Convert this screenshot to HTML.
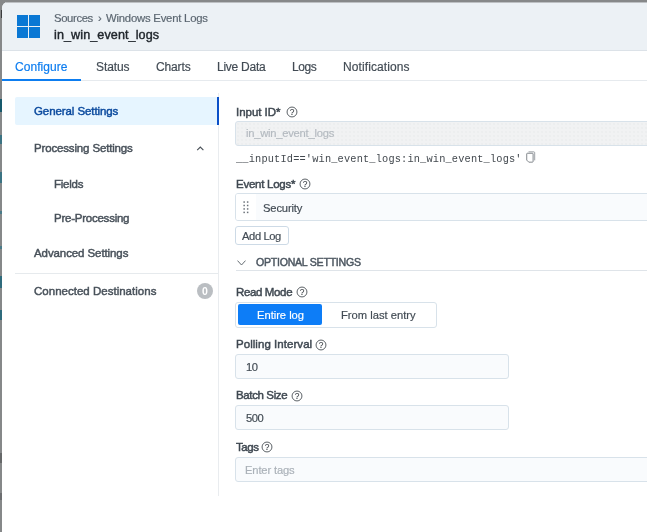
<!DOCTYPE html>
<html>
<head>
<meta charset="utf-8">
<title>in_win_event_logs</title>
<style>
*{box-sizing:border-box;margin:0;padding:0}
html,body{width:647px;height:532px;overflow:hidden}
body{background:#868889;font-family:'Liberation Sans','DejaVu Sans',sans-serif;position:relative;color:#3d4750}
.abs{position:absolute}
svg{will-change:transform}
#modal{position:absolute;left:2px;top:2px;width:700px;height:600px;background:linear-gradient(to bottom,#ecf1f5 48px,#fff 48px);border-radius:6px 0 0 0;overflow:hidden}
.t{position:absolute;white-space:pre;line-height:1;will-change:transform}
</style>
</head>
<body>
<div class="abs" style="left:1px;top:10px;width:1px;height:8px;background:#3a3c3e"></div>
<div class="abs" style="left:0;top:99px;width:2px;height:13px;background:#17596c"></div>
<div class="abs" style="left:0;top:135px;width:2px;height:9px;background:#3b7383"></div>
<div class="abs" style="left:0;top:172px;width:2px;height:11px;background:#3b7383"></div>
<div class="abs" style="left:0;top:211px;width:2px;height:3px;background:#4a7b89"></div>
<div class="abs" style="left:0;top:246px;width:2px;height:3px;background:#4a7b89"></div>
<div class="abs" style="left:0;top:276px;width:2px;height:12px;background:#2f6b7c"></div>
<div class="abs" style="left:0;top:310px;width:2px;height:10px;background:#2f6b7c"></div>
<div class="abs" style="left:0;top:453px;width:2px;height:10px;background:#666869"></div>
<div class="abs" style="left:0;top:493px;width:2px;height:7px;background:#6c6e70"></div>
<div class="abs" style="left:6px;top:2px;width:700px;height:1px;background:#bdc0c3;z-index:3"></div>
<div id="modal">
 <div class="abs" style="left:0px;top:0px;width:700px;height:48px;background:#ecf1f5;"></div>
 <div class="abs" style="left:0px;top:48px;width:700px;height:1px;background:#dce2e8;"></div>
 <svg class="abs" style="left:15px;top:13px" width="23" height="23" viewBox="0 0 23 23"><g fill="#0a78d4"><rect x="0" y="0" width="11" height="11"/><rect x="12" y="0" width="11" height="11"/><rect x="0" y="12" width="11" height="11"/><rect x="12" y="12" width="11" height="11"/></g></svg>
 <div class="abs" style="left:0px;top:78px;width:700px;height:1px;background:#e6eaee;"></div>
 <div class="abs" style="left:0px;top:76.5px;width:78.5px;height:2px;background:#0d7df0;"></div>

 <div class="abs" style="left:13px;top:95px;width:203px;height:28px;background:#e6f5ff;border-radius:2px 0 0 2px;"></div>
 <div class="abs" style="left:216px;top:91px;width:1px;height:403px;background:#e9ecef;"></div>
 <div class="abs" style="left:215px;top:95px;width:2px;height:28px;background:#0b50c8;"></div>
 <svg class="abs" style="left:194.2px;top:143px" width="9" height="7" viewBox="0 0 9 7"><path d="M1.2 5.2 L4.3 2.1 L7.4 5.2" fill="none" stroke="#4a5158" stroke-width="1.15"/></svg>
 <div class="abs" style="left:13px;top:271px;width:203px;height:1px;background:#e6eaed;"></div>
 <div class="abs" style="left:194.5px;top:281px;width:16px;height:16px;background:#babec2;border-radius:8px;"></div>
 <div class="t" id="badge" style="left:199.6px;top:284px;font-size:10.5px;font-weight:bold;color:#fff">0</div>

 <div class="abs" style="left:233px;top:119px;width:501px;height:25px;border:1px solid #d8e2ea;border-radius:3px;background:#f9fbfd;background-color:#f1f2f3;background-image:radial-gradient(circle,#e6e8ea 0.55px,transparent 0.8px);background-size:4px 4px;"></div>
 <svg class="abs" style="left:283.5px;top:103.7px" width="12" height="12" viewBox="0 0 12 12"><circle cx="6" cy="6" r="4.95" fill="none" stroke="#4a5056" stroke-width="0.9"/><text x="6" y="8.95" font-size="8.4" text-anchor="middle" fill="#383e44" stroke="#383e44" stroke-width="0.1" font-family="'Liberation Sans','DejaVu Sans',sans-serif">?</text></svg>
 <svg class="abs" style="left:523.8px;top:149.4px" width="9.5" height="12.2" viewBox="0 0 10 13"><path d="M2.6 0.9 H8.3 Q9.2 0.9 9.2 1.8 V10" fill="none" stroke="#8a9096" stroke-width="0.9"/><path d="M1.4 2.4 H6.8 Q7.5 2.4 7.5 3.1 V11.2 Q7.5 11.9 6.8 11.9 H2.9 L0.7 9.7 V3.1 Q0.7 2.4 1.4 2.4 Z" fill="#fff" stroke="#6c7278" stroke-width="0.9"/></svg>

 <svg class="abs" style="left:296.7px;top:175.5px" width="12" height="12" viewBox="0 0 12 12"><circle cx="6" cy="6" r="4.95" fill="none" stroke="#4a5056" stroke-width="0.9"/><text x="6" y="8.95" font-size="8.4" text-anchor="middle" fill="#383e44" stroke="#383e44" stroke-width="0.1" font-family="'Liberation Sans','DejaVu Sans',sans-serif">?</text></svg>
 <div class="abs" style="left:233px;top:191px;width:501px;height:28px;border:1px solid #d8e2ea;border-radius:3px;background:#f9fbfd;"></div>
 <div class="abs" style="left:234px;top:192px;width:19.5px;height:26px;background:#fff;border-radius:2px 0 0 2px;"></div>
 <svg class="abs" style="left:241.1px;top:199px" width="6" height="13" viewBox="0 0 6 13"><g fill="#6c737a"><rect x="0.4" y="0.30" width="1.5" height="1.5"/><rect x="3.9" y="0.30" width="1.5" height="1.5"/><rect x="0.4" y="3.75" width="1.5" height="1.5"/><rect x="3.9" y="3.75" width="1.5" height="1.5"/><rect x="0.4" y="7.20" width="1.5" height="1.5"/><rect x="3.9" y="7.20" width="1.5" height="1.5"/><rect x="0.4" y="10.65" width="1.5" height="1.5"/><rect x="3.9" y="10.65" width="1.5" height="1.5"/></g></svg>
 <div class="abs" style="left:233px;top:224px;width:54px;height:19px;border:1px solid #cddae6;border-radius:3px;background:#fff;"></div>

 <svg class="abs" style="left:234.5px;top:257.5px" width="9" height="6" viewBox="0 0 9 6"><path d="M0.5 0.6 L4.5 5 L8.5 0.6" fill="none" stroke="#555c63" stroke-width="0.9"/></svg>
 <div class="abs" style="left:234px;top:267.5px;width:500px;height:1px;background:#dfe4e9;"></div>

 <svg class="abs" style="left:293.7px;top:284.1px" width="12" height="12" viewBox="0 0 12 12"><circle cx="6" cy="6" r="4.95" fill="none" stroke="#4a5056" stroke-width="0.9"/><text x="6" y="8.95" font-size="8.4" text-anchor="middle" fill="#383e44" stroke="#383e44" stroke-width="0.1" font-family="'Liberation Sans','DejaVu Sans',sans-serif">?</text></svg>
 <div class="abs" style="left:233px;top:300px;width:202px;height:26px;border:1px solid #d8e2ea;border-radius:3px;background:#f9fbfd;background:#fff;"></div>
 <div class="abs" style="left:236px;top:302px;width:84px;height:21px;background:#0d7df7;border-radius:2px;"></div>

 <svg class="abs" style="left:312.6px;top:336.5px" width="12" height="12" viewBox="0 0 12 12"><circle cx="6" cy="6" r="4.95" fill="none" stroke="#4a5056" stroke-width="0.9"/><text x="6" y="8.95" font-size="8.4" text-anchor="middle" fill="#383e44" stroke="#383e44" stroke-width="0.1" font-family="'Liberation Sans','DejaVu Sans',sans-serif">?</text></svg>
 <div class="abs" style="left:233px;top:352px;width:274px;height:25px;border:1px solid #d8e2ea;border-radius:3px;background:#f9fbfd;"></div>
 <svg class="abs" style="left:288.6px;top:388.0px" width="12" height="12" viewBox="0 0 12 12"><circle cx="6" cy="6" r="4.95" fill="none" stroke="#4a5056" stroke-width="0.9"/><text x="6" y="8.95" font-size="8.4" text-anchor="middle" fill="#383e44" stroke="#383e44" stroke-width="0.1" font-family="'Liberation Sans','DejaVu Sans',sans-serif">?</text></svg>
 <div class="abs" style="left:233px;top:403px;width:274px;height:25px;border:1px solid #d8e2ea;border-radius:3px;background:#f9fbfd;"></div>
 <svg class="abs" style="left:259.4px;top:439.0px" width="12" height="12" viewBox="0 0 12 12"><circle cx="6" cy="6" r="4.95" fill="none" stroke="#4a5056" stroke-width="0.9"/><text x="6" y="8.95" font-size="8.4" text-anchor="middle" fill="#383e44" stroke="#383e44" stroke-width="0.1" font-family="'Liberation Sans','DejaVu Sans',sans-serif">?</text></svg>
 <div class="abs" style="left:233px;top:455px;width:501px;height:25px;border:1px solid #d8e2ea;border-radius:3px;background:#f9fbfd;"></div>

 <div class="t" id="crumb" style="left:51.90px;top:10.68px;font-size:11.3px;font-weight:normal;color:#5b6670;letter-spacing:-0.365px;-webkit-text-stroke:0.18px #5b6670">Sources</div>
 <div class="t" id="crumbsep" style="left:95.60px;top:10.68px;font-size:11.3px;font-weight:normal;color:#5b6670;letter-spacing:-0.266px;-webkit-text-stroke:0.18px #5b6670">›</div>
 <div class="t" id="crumb2" style="left:103.60px;top:10.68px;font-size:11.3px;font-weight:normal;color:#5b6670;letter-spacing:-0.206px;-webkit-text-stroke:0.18px #5b6670">Windows Event Logs</div>
 <div class="t" id="title" style="left:51.90px;top:26.58px;font-size:12.6px;font-weight:normal;color:#20262c;letter-spacing:0.087px;-webkit-text-stroke:0.4px #20262c">in_win_event_logs</div>
 <div class="t" id="tab1" style="left:12.80px;top:59.09px;font-size:12px;font-weight:normal;color:#0d7df0;letter-spacing:0.052px;-webkit-text-stroke:0.18px #0d7df0">Configure</div>
 <div class="t" id="tab2" style="left:94.10px;top:59.09px;font-size:12px;font-weight:normal;color:#424b54;letter-spacing:-0.105px;-webkit-text-stroke:0.18px #424b54">Status</div>
 <div class="t" id="tab3" style="left:153.70px;top:59.09px;font-size:12px;font-weight:normal;color:#424b54;letter-spacing:-0.141px;-webkit-text-stroke:0.18px #424b54">Charts</div>
 <div class="t" id="tab4" style="left:214.80px;top:59.09px;font-size:12px;font-weight:normal;color:#424b54;letter-spacing:-0.245px;-webkit-text-stroke:0.18px #424b54">Live Data</div>
 <div class="t" id="tab5" style="left:289.90px;top:59.09px;font-size:12px;font-weight:normal;color:#424b54;letter-spacing:-0.458px;-webkit-text-stroke:0.18px #424b54">Logs</div>
 <div class="t" id="tab6" style="left:340.90px;top:59.09px;font-size:12px;font-weight:normal;color:#424b54;letter-spacing:0.094px;-webkit-text-stroke:0.18px #424b54">Notifications</div>
 <div class="t" id="n1" style="left:32.10px;top:103.52px;font-size:11.5px;font-weight:normal;color:#0b4a9e;letter-spacing:-0.086px;-webkit-text-stroke:0.46px #0b4a9e">General Settings</div>
 <div class="t" id="n2" style="left:32.10px;top:140.52px;font-size:11.5px;font-weight:normal;color:#48515a;letter-spacing:-0.155px;-webkit-text-stroke:0.46px #48515a">Processing Settings</div>
 <div class="t" id="n3" style="left:52.10px;top:176.52px;font-size:11.5px;font-weight:normal;color:#48515a;letter-spacing:-0.248px;-webkit-text-stroke:0.46px #48515a">Fields</div>
 <div class="t" id="n4" style="left:52.10px;top:210.52px;font-size:11.5px;font-weight:normal;color:#48515a;letter-spacing:-0.238px;-webkit-text-stroke:0.46px #48515a">Pre-Processing</div>
 <div class="t" id="n5" style="left:32.10px;top:245.52px;font-size:11.5px;font-weight:normal;color:#48515a;letter-spacing:-0.094px;-webkit-text-stroke:0.46px #48515a">Advanced Settings</div>
 <div class="t" id="n6" style="left:32.10px;top:283.52px;font-size:11.5px;font-weight:normal;color:#48515a;letter-spacing:0.013px;-webkit-text-stroke:0.46px #48515a">Connected Destinations</div>
 <div class="t" id="l1" style="left:233.80px;top:104.52px;font-size:11.5px;font-weight:normal;color:#3f4851;letter-spacing:-0.028px;-webkit-text-stroke:0.46px #3f4851">Input ID*</div>
 <div class="t" id="v1" style="left:244.00px;top:125.77px;font-size:11.2px;font-weight:normal;color:#b4bac0;letter-spacing:-0.239px;-webkit-text-stroke:0.18px #b4bac0">in_win_event_logs</div>
 <div class="t" id="mono" style="left:234.00px;top:151.53px;font-size:10.3px;font-weight:normal;color:#43494f;letter-spacing:0.170px;font-family:'Liberation Mono','DejaVu Sans Mono',monospace">__inputId=='win_event_logs:in_win_event_logs'</div>
 <div class="t" id="l2" style="left:233.80px;top:176.52px;font-size:11.5px;font-weight:normal;color:#3f4851;letter-spacing:-0.256px;-webkit-text-stroke:0.46px #3f4851">Event Logs*</div>
 <div class="t" id="v2" style="left:260.80px;top:200.77px;font-size:11.2px;font-weight:normal;color:#424b54;letter-spacing:-0.153px;-webkit-text-stroke:0.18px #424b54">Security</div>
 <div class="t" id="addlog" style="left:240.10px;top:228.77px;font-size:11.2px;font-weight:normal;color:#424b54;letter-spacing:-0.398px;-webkit-text-stroke:0.18px #424b54">Add Log</div>
 <div class="t" id="opt" style="left:254.40px;top:255.28px;font-size:10.6px;font-weight:normal;color:#4d5761;letter-spacing:-0.258px;-webkit-text-stroke:0.46px #4d5761">OPTIONAL SETTINGS</div>
 <div class="t" id="l3" style="left:233.80px;top:284.52px;font-size:11.5px;font-weight:normal;color:#3f4851;letter-spacing:-0.363px;-webkit-text-stroke:0.46px #3f4851">Read Mode</div>
 <div class="t" id="b1" style="left:255.00px;top:307.77px;font-size:11.2px;font-weight:normal;color:#ffffff;letter-spacing:-0.027px;-webkit-text-stroke:0.18px #ffffff">Entire log</div>
 <div class="t" id="b2" style="left:338.60px;top:307.77px;font-size:11.2px;font-weight:normal;color:#424b54;letter-spacing:-0.001px;-webkit-text-stroke:0.18px #424b54">From last entry</div>
 <div class="t" id="l4" style="left:233.80px;top:336.52px;font-size:11.5px;font-weight:normal;color:#3f4851;letter-spacing:0.048px;-webkit-text-stroke:0.46px #3f4851">Polling Interval</div>
 <div class="t" id="v3" style="left:244.00px;top:359.77px;font-size:11.2px;font-weight:normal;color:#424b54;letter-spacing:-0.477px;-webkit-text-stroke:0.18px #424b54">10</div>
 <div class="t" id="l5" style="left:233.80px;top:387.52px;font-size:11.5px;font-weight:normal;color:#3f4851;letter-spacing:-0.378px;-webkit-text-stroke:0.46px #3f4851">Batch Size</div>
 <div class="t" id="v4" style="left:244.00px;top:410.77px;font-size:11.2px;font-weight:normal;color:#424b54;letter-spacing:-0.491px;-webkit-text-stroke:0.18px #424b54">500</div>
 <div class="t" id="l6" style="left:233.80px;top:439.52px;font-size:11.5px;font-weight:normal;color:#3f4851;letter-spacing:-0.449px;-webkit-text-stroke:0.46px #3f4851">Tags</div>
 <div class="t" id="v5" style="left:242.80px;top:462.77px;font-size:11.2px;font-weight:normal;color:#aab1b8;letter-spacing:-0.150px;-webkit-text-stroke:0.18px #aab1b8">Enter tags</div>
</div>
</body>
</html>
